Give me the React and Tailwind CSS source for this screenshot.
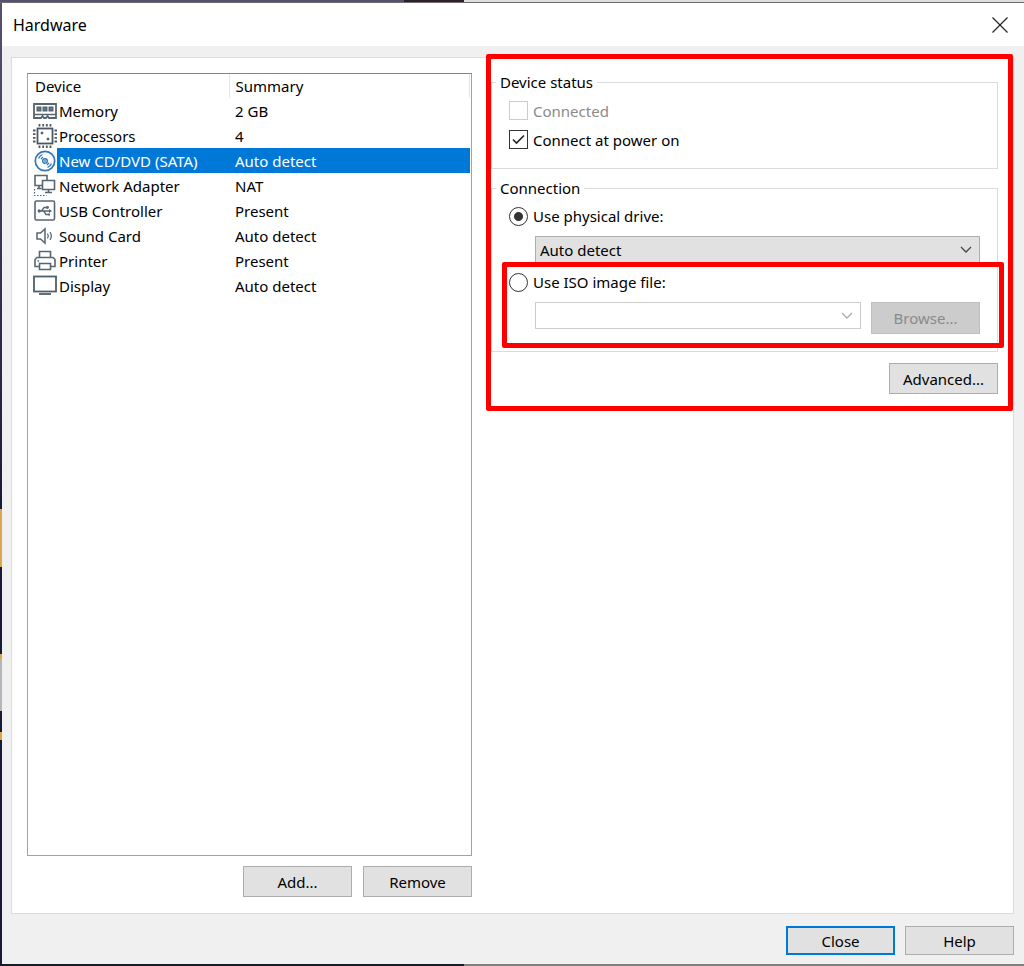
import { useState } from "react";

const BUTTON =
  "w-[109px] h-[31px] border border-[#adadad] bg-[#e1e1e1] text-center text-black";

const MemoryIcon = () => (
  <svg width="24" height="24" viewBox="0 0 24 24" fill="none" stroke="#566773">
    <path d="M1 5h22v14h-7l-1.500-2-1.500 2h-2l-1.500-2L8 19H1z" strokeWidth="1.800" />
    <path d="M1 15.500h22" strokeWidth="1.500" />
    <path d="M4.500 8.500h3v3h-3zM10.500 8.500h3v3h-3zM16.500 8.500h3v3h-3z" fill="#9aa5ad" strokeWidth="2" />
  </svg>
);

const ProcessorIcon = () => (
  <svg width="24" height="24" viewBox="0 0 24 24" fill="none" stroke="#4b5863">
    <rect x="4.500" y="4.500" width="15" height="15" strokeWidth="1.800" />
    <path
      d="M6.500 0v2.500M10.200 0v2.500M13.800 0v2.500M17.500 0v2.500M6.500 21.500v2.500M10.200 21.500v2.500M13.800 21.500v2.500M17.500 21.500v2.500M0 6.500h2.500M0 10.200h2.500M0 13.800h2.500M0 17.500h2.500M21.500 6.500h2.500M21.500 10.200h2.500M21.500 13.800h2.500M21.500 17.500h2.500"
      strokeWidth="1.800"
    />
    <circle cx="9" cy="9" r="1" fill="#4b5863" />
    <circle cx="15" cy="15" r="1" fill="#4b5863" />
  </svg>
);

const DiscIcon = () => (
  <svg width="24" height="24" viewBox="0 0 24 24" fill="none" stroke="#2f78b7">
    <circle cx="12" cy="12" r="9.700" strokeWidth="1.700" />
    <circle cx="12" cy="12" r="2.300" strokeWidth="1.400" />
    <circle cx="12" cy="12" r="0.500" fill="#2f78b7" />
    <path
      d="M5.500 9.500A7 7 0 0 1 9.500 5.500M8 10.200A4.500 4.500 0 0 1 10.200 8M18.500 14.500a7 7 0 0 1-4 4M16 13.800a4.500 4.500 0 0 1-2.200 2.200"
      strokeWidth="1.300"
    />
  </svg>
);

const NetworkIcon = () => (
  <svg width="24" height="24" viewBox="0 0 24 24" fill="none" stroke="#566773" strokeWidth="1.600">
    <path d="M9 11.500H2V1.500h12V6" />
    <path d="M6 11.500v3M4 14.500h4.500" />
    <path d="M9.500 6.500h12v9h-12z" />
    <path d="M15.500 15.500v3M12 18.500h7" />
    <path d="M1.500 15v6.500h12" strokeWidth="1.200" strokeDasharray="1.500 1.500" />
  </svg>
);

const UsbIcon = () => (
  <svg width="24" height="24" viewBox="0 0 24 24" fill="none" stroke="#566773" strokeWidth="1.300">
    <rect x="2" y="2" width="19.500" height="19" rx="1.500" strokeWidth="1.600" />
    <path d="M6 12h11.500M8.500 12l2.500-3.500h3M10.500 12l2.500 3.500h2.500" />
    <circle cx="6.200" cy="12" r="1" fill="#566773" />
    <path d="M16 10l3 2-3 2z" fill="#566773" stroke="none" />
    <circle cx="14.500" cy="8.500" r="0.800" fill="#566773" />
    <path d="M15 14.500h2v2h-2z" fill="#566773" stroke="none" />
  </svg>
);

const SoundIcon = () => (
  <svg width="24" height="24" viewBox="0 0 24 24" fill="none" stroke="#566773" strokeWidth="1.500">
    <path d="M4 9h3.500L12 5v14l-4.500-4H4z" />
    <path d="M14.500 9.500q1.600 2.500 0 5M17 8q2.600 4 0 8" strokeWidth="1.300" />
  </svg>
);

const PrinterIcon = () => (
  <svg width="24" height="24" viewBox="0 0 24 24" fill="none" stroke="#566773" strokeWidth="1.600">
    <path d="M6.500 8.500v-6h11v6" />
    <path d="M6.500 17.500H2v-7l2-2h16l2 2v7h-4.500" />
    <path d="M6.500 14.500h11v6h-11z" />
    <path d="M4.500 12h1.500" />
  </svg>
);

const DisplayIcon = () => (
  <svg width="24" height="24" viewBox="0 0 24 24" fill="none" stroke="#4f5f6c">
    <rect x="1" y="2.500" width="22" height="15" strokeWidth="1.800" />
    <path d="M6 20h12" strokeWidth="1.800" />
  </svg>
);

const devices = [
  { name: "Memory", summary: "2 GB", Icon: MemoryIcon },
  { name: "Processors", summary: "4", Icon: ProcessorIcon },
  { name: "New CD/DVD (SATA)", summary: "Auto detect", Icon: DiscIcon },
  { name: "Network Adapter", summary: "NAT", Icon: NetworkIcon },
  { name: "USB Controller", summary: "Present", Icon: UsbIcon },
  { name: "Sound Card", summary: "Auto detect", Icon: SoundIcon },
  { name: "Printer", summary: "Present", Icon: PrinterIcon },
  { name: "Display", summary: "Auto detect", Icon: DisplayIcon },
];

const Chevron = ({ className }) => (
  <svg
    className={`pointer-events-none absolute right-2 top-2 ${className}`}
    width="12"
    height="12"
    viewBox="0 0 12 12"
    fill="none"
    stroke="currentColor"
    strokeWidth="1.300"
  >
    <path d="M1 3l5 5 5-5" />
  </svg>
);

const DeviceList = ({ selected, onSelect }) => (
  <div className="flex-1 border border-[#a0a2aa] border-t-[#82848f] bg-white pr-px">
    <table className="w-full table-fixed border-collapse text-left">
      <thead>
        <tr className="h-6">
          <th className="w-[201px] border-r border-[#e5e5e5] p-0 pl-[7px] font-normal">
            Device
          </th>
          <th className="border-r border-[#e5e5e5] p-0 pl-[6px] font-normal">
            Summary
          </th>
        </tr>
      </thead>
      <tbody>
        {devices.map(({ name, summary, Icon }) => {
          const active = name === selected;
          return (
            <tr key={name} className="h-[25px]" onClick={() => onSelect(name)}>
              <td className="p-0">
                <div className="flex h-[25px] items-center pl-[5px]">
                  <span className="shrink-0">
                    <Icon />
                  </span>
                  <span
                    className={`flex h-[25px] flex-1 items-center whitespace-nowrap pl-[2px] ${
                      active ? "bg-[#0078d7] text-white" : ""
                    }`}
                  >
                    {name}
                  </span>
                </div>
              </td>
              <td className={`p-0 pl-[6px] ${active ? "bg-[#0078d7] text-white" : ""}`}>
                {summary}
              </td>
            </tr>
          );
        })}
      </tbody>
    </table>
  </div>
);

const CheckOption = ({ id, label, disabled, checked, onChange }) => (
  <div className="flex h-[29px] items-center gap-[5px]">
    <span className="relative flex">
      <input
        id={id}
        type="checkbox"
        checked={checked}
        disabled={disabled}
        onChange={onChange}
        className="h-[19px] w-[19px] appearance-none border border-[#333333] bg-white disabled:border-[#cccccc]"
      />
      {checked && (
        <svg
          className="pointer-events-none absolute inset-0"
          width="19"
          height="19"
          viewBox="0 0 19 19"
          fill="none"
          stroke="#222222"
          strokeWidth="1.600"
        >
          <path d="M4 9.500l3.500 3.500L15 5.500" />
        </svg>
      )}
    </span>
    <label htmlFor={id} className={disabled ? "text-[#8a8a8a]" : ""}>
      {label}
    </label>
  </div>
);

const RadioOption = ({ id, label, checked, onChange }) => (
  <div className="flex h-7 items-center gap-[5px]">
    <input
      id={id}
      type="radio"
      name="connection"
      checked={checked}
      onChange={onChange}
      className="h-[19px] w-[19px] appearance-none rounded-full border border-[#333333] bg-white checked:bg-[radial-gradient(circle,#333333_4px,white_5px)]"
    />
    <label htmlFor={id}>{label}</label>
  </div>
);

const DeviceSettings = () => {
  const [powerOn, setPowerOn] = useState(true);
  const [source, setSource] = useState("physical");
  const iso = source === "iso";

  return (
    <div className="relative flex flex-col">
      <fieldset className="border border-[#dcdcdc] pb-[14px] pl-[17px] pr-[17px] pt-[5px]">
        <legend className="-ml-[13px] h-[18px] px-1 leading-[18px]">Device status</legend>
        <CheckOption id="connected" label="Connected" checked={false} disabled />
        <CheckOption
          id="power-on"
          label="Connect at power on"
          checked={powerOn}
          onChange={() => setPowerOn(!powerOn)}
        />
      </fieldset>

      <fieldset className="mt-[10px] border border-[#dcdcdc] pb-[17px] pl-[17px] pr-[17px] pt-[5px]">
        <legend className="-ml-[13px] h-[18px] px-1 leading-[18px]">Connection</legend>
        <RadioOption
          id="physical"
          label="Use physical drive:"
          checked={!iso}
          onChange={() => setSource("physical")}
        />
        <div className="relative ml-[26px] mt-[6px]">
          <select
            aria-label="Physical drive"
            className="block h-7 w-full appearance-none border border-[#adadad] bg-[#e1e1e1] px-1"
          >
            <option>Auto detect</option>
          </select>
          <Chevron className="text-[#444444]" />
        </div>

        <div className="relative mt-1">
          <RadioOption
            id="iso"
            label="Use ISO image file:"
            checked={iso}
            onChange={() => setSource("iso")}
          />
          <div className="ml-[26px] mt-[6px] flex items-start gap-[10px]">
            <div className="relative flex-1">
              <select
                aria-label="ISO image file"
                disabled={!iso}
                className="block h-[27px] w-full appearance-none border border-[#cccccc] bg-white px-1"
              >
                <option></option>
              </select>
              <Chevron className="text-[#aaaaaa]" />
            </div>
            <button
              type="button"
              disabled={!iso}
              className="h-8 w-[109px] border border-[#bfbfbf] bg-[#cccccc] text-[#8a8a8a]"
            >
              Browse...
            </button>
          </div>
          {/* highlight around the ISO option */}
          <div className="pointer-events-none absolute -bottom-[14px] -left-[7px] -right-6 -top-[6px] rounded-[2px] border-[5px] border-[#ff0000]" />
        </div>
      </fieldset>

      <button type="button" className={`${BUTTON} mt-[11px] self-end`}>
        Advanced...
      </button>

      {/* highlight around the whole settings pane */}
      <div className="pointer-events-none absolute -bottom-[17px] -left-[5px] -right-[15px] -top-[19px] rounded-[2px] border-[5px] border-[#ff0000]" />
    </div>
  );
};

// Slivers of the desktop that show around the window
const DesktopLeft = () => (
  <div className="flex w-[2px] shrink-0 flex-col bg-[#1b1a35]">
    <div className="h-[506px] bg-linear-to-b from-[#57516e] to-[#1b1a35]" />
    <div className="h-[58px] bg-[#d9a84e]" />
    <div className="h-[87px]" />
    <div className="h-[5px] bg-[#d9a84e]" />
    <div className="h-[52px] bg-[#b5b5bb]" />
    <div className="h-[21px]" />
    <div className="h-2 bg-[#e0a53c]" />
  </div>
);

const App = () => {
  const [selected, setSelected] = useState("New CD/DVD (SATA)");

  return (
    <div className="flex min-h-screen flex-col font-['Noto_Sans','Open_Sans',sans-serif] text-[15px] leading-5 text-black">
      <div className="flex h-[3px] border-b border-[#6b6b70]">
        <div className="w-[404px] bg-[#57516e]" />
        <div className="w-[60px] bg-[#2a2028]" />
        <div className="flex-1 bg-[#dedede]" />
      </div>

      <div className="flex flex-1">
        <DesktopLeft />
        <main className="flex flex-1 flex-col bg-[#f0f0f0]">
          <header className="flex h-[43px] items-center justify-between bg-white pl-[11px] pr-4">
            <h1 className="text-base">Hardware</h1>
            <button type="button" aria-label="Close window">
              <svg width="16" height="16" viewBox="0 0 16 16" stroke="#222222" strokeWidth="1.200">
                <path d="M0.500 0.500l15 15M15.500 0.500l-15 15" />
              </svg>
            </button>
          </header>

          <section className="ml-[9px] mr-[10px] mt-[11px] grid flex-1 grid-cols-[445px_1fr] gap-x-[19px] border border-[#dcdcdc] bg-white px-[15px] pb-4 pt-[15px]">
            <div className="flex flex-col">
              <DeviceList selected={selected} onSelect={setSelected} />
              <div className="mt-[10px] flex justify-end gap-[11px]">
                <button type="button" className={BUTTON}>
                  Add...
                </button>
                <button type="button" className={BUTTON}>
                  Remove
                </button>
              </div>
            </div>
            <div>
              <DeviceSettings />
            </div>
          </section>

          <footer className="flex justify-end gap-[10px] pb-[9px] pr-[10px] pt-3">
            <button
              type="button"
              className="h-[29px] w-[109px] border-2 border-[#0078d7] bg-[#e1e1e1]"
            >
              Close
            </button>
            <button
              type="button"
              className="h-[29px] w-[109px] border border-[#adadad] bg-[#e1e1e1]"
            >
              Help
            </button>
          </footer>
        </main>
      </div>

      <div className="flex h-[2px]">
        <div className="w-[464px] bg-[#1b1a2b]" />
        <div className="flex-1 bg-[#808080]" />
      </div>
    </div>
  );
};

export default App;
